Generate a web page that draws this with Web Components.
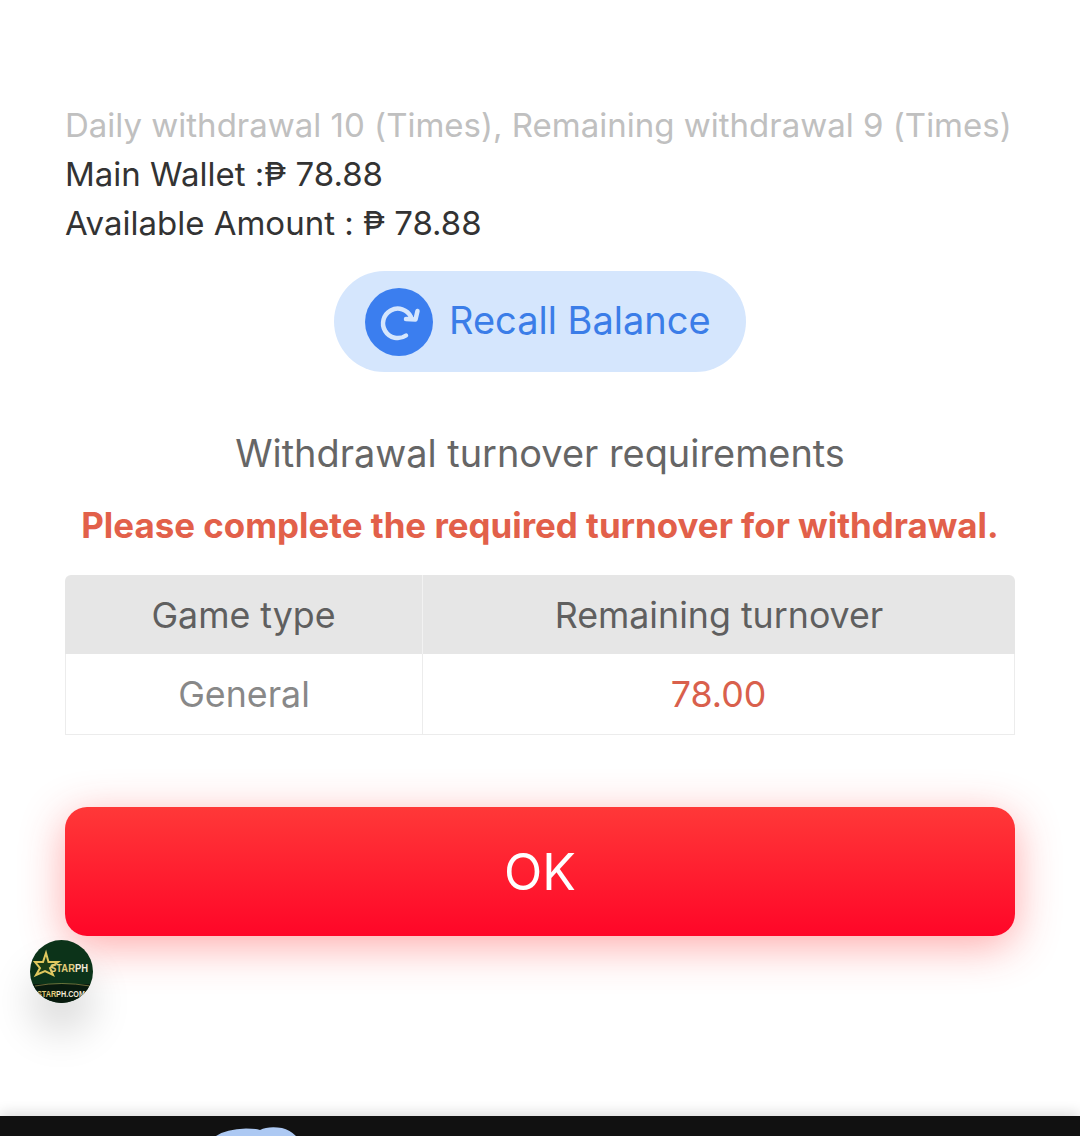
<!DOCTYPE html>
<html>
<head>
<meta charset="utf-8">
<style>
  html, body { margin: 0; padding: 0; background: #fff; }
  body { width: 1080px; height: 1136px; overflow: hidden; position: relative; font-family: Inter, "Liberation Sans", sans-serif; font-feature-settings: "calt" 0; }
</style>
</head>
<body>
<withdraw-page></withdraw-page>
<float-logo></float-logo>
<bottom-bar></bottom-bar>

<script>
class RecallButton extends HTMLElement {
  constructor() {
    super();
    this.attachShadow({ mode: "open" }).innerHTML = `
    <style>
      :host { display: flex; justify-content: center; }
      .btn { width: 412px; height: 101px; box-sizing: border-box; padding-left: 31px; border-radius: 51px; background: #d5e6fd;
        display: flex; align-items: center; gap: 16px; color: #3b7de8; font-size: 38px; }
      .ic { width: 68px; height: 68px; border-radius: 50%; background: #3b7eef; display: block; }
      .ic svg { display: block; }
      .txt { padding-bottom: 3px; }
    </style>
    <div class="btn">
      <span class="ic">
        <svg width="68" height="68" viewBox="0 0 68 68" fill="none" stroke="#d5e6fd" stroke-width="4.500" stroke-linecap="round" stroke-linejoin="round">
          <path d="M46 29A14.700 14.700 0 1 0 41 47.500"/>
          <path d="M41 31L50.500 31.500L52.500 23"/>
        </svg>
      </span>
      <span class="txt"><slot></slot></span>
    </div>`;
  }
}
customElements.define("recall-button", RecallButton);

class TurnoverTable extends HTMLElement {
  constructor() {
    super();
    this.attachShadow({ mode: "open" }).innerHTML = `
    <style>
      :host { display: block; }
      .t { display: grid; grid-template-columns: 358px 1fr; border-radius: 6px 6px 0 0; overflow: hidden; font-size: 35.750px; text-align: center; }
      .c { display: flex; align-items: center; justify-content: center; box-sizing: border-box; }
      .h { height: 79px; background: #e6e6e6; color: #5f5f5f; }
      .h.a { border-right: 1px solid #f2f2f2; }
      .b { height: 81px; border-bottom: 1px solid #ececec; }
      .b.a { color: #888; border-left: 1px solid #ececec; border-right: 1px solid #ececec; }
      .b.v { color: #d9604c; border-right: 1px solid #ececec; }
    </style>
    <div class="t">
      <div class="c h a">Game type</div>
      <div class="c h">Remaining turnover</div>
      <div class="c b a">General</div>
      <div class="c b v">78.00</div>
    </div>`;
  }
}
customElements.define("turnover-table", TurnoverTable);

class WithdrawPage extends HTMLElement {
  constructor() {
    super();
    this.attachShadow({ mode: "open" }).innerHTML = `
    <style>
      :host { display: block; padding: 101px 65px 0; font-size: 33px; }
      .line { line-height: 49px; color: #333; white-space: nowrap; }
      .muted { color: #c0c0c0; }
      recall-button { margin-top: 23px; }
      h2 { margin: 55px 0 0; font-weight: 400; font-size: 37.900px; line-height: 52px; color: #666; text-align: center; }
      .warn { margin-top: 22px; font-weight: 700; font-size: 34.900px; line-height: 48px; color: #e2604a; text-align: center; white-space: nowrap; }
      turnover-table { margin-top: 26px; }
      .ok { margin-top: 72px; height: 129px; border-radius: 22px; background: linear-gradient(#ff3838, #ff0628);
        box-shadow: 0 10px 44px rgba(255, 50, 50, .42); color: #fff; font-size: 50px; display: flex; align-items: center; justify-content: center; }
    </style>
    <div class="line muted">Daily withdrawal 10 (Times), Remaining withdrawal 9 (Times)</div>
    <div class="line">Main Wallet :₱ 78.88</div>
    <div class="line">Available Amount : ₱ 78.88</div>
    <recall-button>Recall Balance</recall-button>
    <h2>Withdrawal turnover requirements</h2>
    <div class="warn">Please complete the required turnover for withdrawal.</div>
    <turnover-table></turnover-table>
    <div class="ok">OK</div>`;
  }
}
customElements.define("withdraw-page", WithdrawPage);

class FloatLogo extends HTMLElement {
  constructor() {
    super();
    this.attachShadow({ mode: "open" }).innerHTML = `
    <style>
      :host { position: absolute; left: 30px; top: 940px; width: 63px; height: 63px; border-radius: 50%;
        box-shadow: 0 30px 42px rgba(0, 0, 0, .15); display: block; }
      svg { display: block; }
      text { font-family: "Liberation Sans", sans-serif; font-weight: 700; }
    </style>
    <svg width="63" height="63" viewBox="0 0 63 63">
      <defs>
        <clipPath id="c"><circle cx="31.500" cy="31.500" r="31.500"/></clipPath>
        <linearGradient id="g1" gradientUnits="userSpaceOnUse" x1="0" x2="63" y1="0" y2="0">
          <stop offset=".72" stop-color="#e3cd78"/><stop offset=".72" stop-color="#f0ecd8"/>
        </linearGradient>
        <linearGradient id="g2" gradientUnits="userSpaceOnUse" x1="0" x2="63" y1="0" y2="0">
          <stop offset=".43" stop-color="#e3cd78"/><stop offset=".43" stop-color="#f0ecd8"/>
        </linearGradient>
      </defs>
      <g clip-path="url(#c)">
        <rect width="63" height="63" fill="#0c3319"/>
        <rect y="44" width="63" height="19" fill="#081a0e"/>
        <path d="M5 46 Q31 41 60 46" fill="none" stroke="#c9b560" stroke-opacity=".5" stroke-width="1"/>
        <path transform="translate(3 2)" d="M13 11 L15.500 20 L25 20 L17 26 L20 33 L12 29 L3 33 L7 26 L2 20 L10 20 Z" fill="#1a3d16" stroke="#e0c85e" stroke-width="2"/>
        <text x="20" y="32" font-size="10" fill="url(#g1)" textLength="38" lengthAdjust="spacingAndGlyphs">STARPH</text>
        <text x="7" y="56.500" font-size="8.500" fill="url(#g2)" textLength="48" lengthAdjust="spacingAndGlyphs">STARPH.COM</text>
      </g>
    </svg>`;
  }
}
customElements.define("float-logo", FloatLogo);

class BottomBar extends HTMLElement {
  constructor() {
    super();
    this.attachShadow({ mode: "open" }).innerHTML = `
    <style>
      :host { position: absolute; left: 0; right: 0; bottom: 0; height: 20px; background: #111; display: block;
        box-shadow: 0 -3px 14px rgba(0, 0, 0, .14); overflow: hidden; }
      svg { position: absolute; left: 212px; top: 11px; }
    </style>
    <svg width="88" height="9" viewBox="0 0 88 9"><path d="M4 9 Q14 2 34 1.500 Q44 1.500 48 3 Q56 -1 70 1 Q78 3 84 9 Z" fill="#adc9f3"/></svg>`;
  }
}
customElements.define("bottom-bar", BottomBar);
</script>
</body>
</html>
